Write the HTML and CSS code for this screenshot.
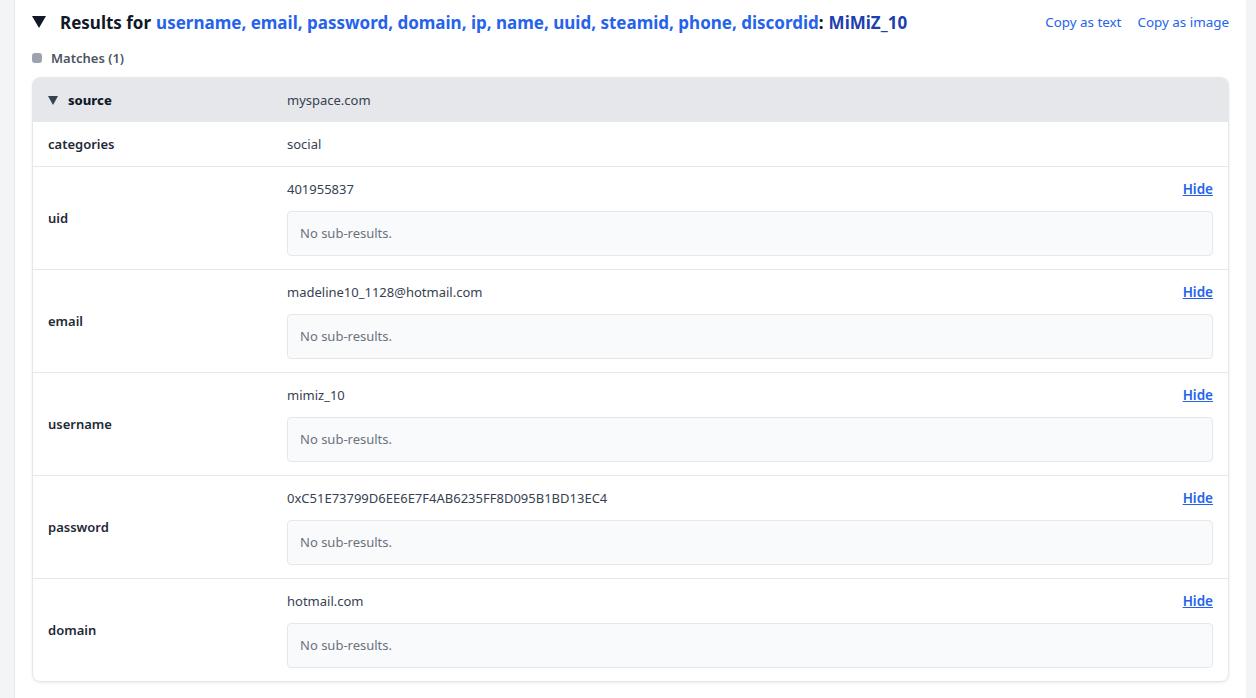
FILE: index.html
```html
<!DOCTYPE html>
<html>
<head>
<meta charset="utf-8">
<link rel="stylesheet" href="styles.css">
</head>
<body>
<div class="panel">
  <div class="head">
    <h1 class="title"><svg class="caret" width="14" height="12" viewBox="0 0 14 12"><path d="M0 0H14L7 12Z" fill="#111827"/></svg>Results for <span class="types">username, email, password, domain, ip, name, uuid, steamid, phone, discordid</span>: <span class="query">MiMiZ_10</span></h1>
    <div class="actions"><a class="act">Copy as text</a><a class="act">Copy as image</a></div>
  </div>
  <div class="matches"><span class="dot"></span>Matches (1)</div>
  <div class="card">
    <div class="row row-head">
      <div class="key"><svg class="mini-caret" width="10" height="9" viewBox="0 0 10 9"><path d="M0 0H10L5 9Z" fill="#374151"/></svg>source</div>
      <div class="val">myspace.com</div>
    </div>
    <div class="row row-plain">
      <div class="key">categories</div>
      <div class="val">social</div>
    </div>
    <div class="row">
      <div class="key">uid</div>
      <div class="val"><div class="val-top"><span>401955837</span><a class="hide">Hide</a></div><div class="sub">No sub-results.</div></div>
    </div>
    <div class="row">
      <div class="key">email</div>
      <div class="val"><div class="val-top"><span>madeline10_1128@hotmail.com</span><a class="hide">Hide</a></div><div class="sub">No sub-results.</div></div>
    </div>
    <div class="row">
      <div class="key">username</div>
      <div class="val"><div class="val-top"><span>mimiz_10</span><a class="hide">Hide</a></div><div class="sub">No sub-results.</div></div>
    </div>
    <div class="row">
      <div class="key">password</div>
      <div class="val"><div class="val-top"><span>0xC51E73799D6EE6E7F4AB6235FF8D095B1BD13EC4</span><a class="hide">Hide</a></div><div class="sub">No sub-results.</div></div>
    </div>
    <div class="row">
      <div class="key">domain</div>
      <div class="val"><div class="val-top"><span>hotmail.com</span><a class="hide">Hide</a></div><div class="sub">No sub-results.</div></div>
    </div>
  </div>
</div>
</body>
</html>
```

FILE: styles.css
```css
html, body {
  margin: 0;
  padding: 0;
  background: #f3f4f6;
  font-family: "Noto Sans", "Open Sans", sans-serif;
  color: #374151;
}
.panel {
  margin: 0 10px 0 14px;
  background: #ffffff;
  border-left: 1px solid #e5e7eb;
  padding: 8px 17px 16px 17px;
  min-height: 674px;
}
.head {
  display: flex;
  align-items: center;
  justify-content: space-between;
  height: 28px;
}
.title {
  margin: 0;
  font-size: 17px;
  font-weight: 700;
  color: #111827;
  display: flex;
  align-items: center;
  white-space: nowrap;
}
.caret {
  margin-right: 14px;
  flex: none;
}
.types {
  color: #2563eb;
  margin-left: 5px;
}
.query {
  color: #1e40af;
  margin-left: 5px;
}
.actions {
  display: flex;
  gap: 16px;
}
.act {
  font-size: 13.4px;
  color: #2563eb;
}
.matches {
  display: flex;
  align-items: center;
  font-size: 13px;
  font-weight: 600;
  color: #4b5563;
  margin-top: 8px;
  height: 28px;
}
.dot {
  width: 10px;
  height: 10px;
  border-radius: 3px;
  background: #9ca3af;
  margin-right: 9px;
}
.card {
  margin-top: 5px;
  border: 1px solid #e5e7eb;
  border-radius: 8px;
  box-shadow: 0 1px 3px rgba(0,0,0,0.08);
  overflow: hidden;
  font-size: 13px;
}
.row {
  display: grid;
  grid-template-columns: 254px 1fr;
  align-items: center;
  border-top: 1px solid #e5e7eb;
}
.row-head {
  border-top: none;
  background: #e5e7eb;
}
.row-plain { border-top: none; }
.key {
  padding: 12px 15px;
  font-weight: 600;
  color: #1f2937;
  line-height: 20px;
  display: flex;
  align-items: center;
}
.row-head .key { font-weight: 800; color: #111827; }
.mini-caret {
  margin-right: 10px;
  flex: none;
}
.val {
  padding: 12px 15px 13px 0;
  line-height: 20px;
  color: #374151;
}
.row-head .val, .row-plain .val { padding-bottom: 12px; }
.val-top {
  display: flex;
  justify-content: space-between;
}
.hide {
  color: #2563eb;
  text-decoration: underline;
  font-weight: 600;
  font-size: 13.5px;
}
.sub {
  margin-top: 12px;
  background: #f9fafb;
  border: 1px solid #e5e7eb;
  border-radius: 4px;
  padding: 12px 12px;
  line-height: 19px;
  color: #6b7280;
}
```
